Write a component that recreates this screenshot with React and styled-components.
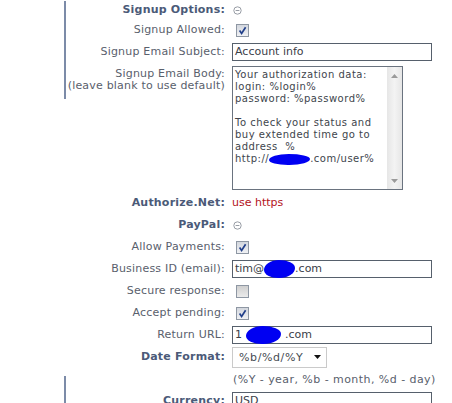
import React from "react";
import styled, { createGlobalStyle } from "styled-components";

const GlobalStyle = createGlobalStyle`
  body {
    margin: 0;
    background: #ffffff;
  }
`;

const Form = styled.div`
  width: 452px;
  padding-top: 1px;
  font-family: "DejaVu Sans", Verdana, sans-serif;
  font-size: 11px;
`;

const Row = styled.div`
  display: grid;
  grid-template-columns: 64px 2px 159px 227px;
  height: ${(p) => p.$h || 22}px;
  align-items: ${(p) => (p.$top ? "start" : "center")};
`;

const Rail = styled.div`
  grid-column: 2;
  align-self: stretch;
  background: ${(p) =>
    p.$from == null
      ? "transparent"
      : `linear-gradient(to bottom, transparent ${p.$from}, #7c8ba8 ${p.$from}, #7c8ba8 ${p.$to}, transparent ${p.$to})`};
`;

const Label = styled.div`
  grid-column: 3;
  text-align: right;
  white-space: nowrap;
  letter-spacing: 0.2px;
  line-height: 12px;
  padding-top: ${(p) => p.$pad || 0}px;
  color: ${(p) => (p.$bold ? "#4b5a78" : "#59606c")};
  font-weight: ${(p) => (p.$bold ? "bold" : "normal")};
`;

const Control = styled.div`
  grid-column: 4;
  display: flex;
  align-items: center;
  padding-left: 7px;
`;

const Toggle = styled.svg`
  margin-left: 1px;
  display: block;
`;

const Box = styled.span`
  display: flex;
  align-items: center;
  justify-content: center;
  width: 13px;
  height: 13px;
  margin-left: 4px;
  box-sizing: border-box;
  border: 1px solid #8e97a3;
  background: ${(p) =>
    p.$on
      ? "linear-gradient(#d3d7de, #f0f1f4)"
      : "linear-gradient(#cfcfcf, #ebebeb)"};
`;

const Field = styled.div`
  display: flex;
  align-items: center;
  width: 200px;
  height: 18px;
  box-sizing: border-box;
  padding: 0 2px;
  border: 1px solid #56606c;
  color: #3b4048;
  line-height: 16px;
  white-space: nowrap;
`;

const Blob = styled.span`
  display: inline-block;
  flex-shrink: 0;
  width: ${(p) => p.$w}px;
  height: ${(p) => p.$h}px;
  margin: 0 ${(p) => p.$mx || 0}px;
  background: #0000f2;
  border-radius: 48% 52% 50% 46% / 55% 45% 55% 45%;
  vertical-align: middle;
`;

const TextArea = styled.div`
  display: grid;
  grid-template-columns: 1fr 15px;
  width: 171px;
  height: 124px;
  box-sizing: border-box;
  margin-top: 3px;
  border: 1px solid #6a737f;
`;

const AreaText = styled.div`
  padding: 2px 2px;
  font-size: 10px;
  line-height: 12px;
  letter-spacing: 0.5px;
  color: #40454c;
  white-space: pre;
`;

const Scroll = styled.div`
  display: flex;
  flex-direction: column;
  justify-content: space-between;
  align-items: center;
  padding: 7px 0 6px;
  background: linear-gradient(to right, #e6e6e6, #f3f3f3 50%, #e6e6e6);
`;

const Red = styled.span`
  color: #b3131c;
  line-height: 12px;
`;

const Hint = styled.span`
  color: #59606c;
  letter-spacing: 0.45px;
  padding-left: 1px;
`;

const Select = styled.div`
  display: flex;
  align-items: center;
  justify-content: space-between;
  width: 95px;
  height: 21px;
  box-sizing: border-box;
  padding: 0 5px 0 6px;
  border: 1px solid #cacaca;
  color: #464b52;
  letter-spacing: 0.6px;
`;

const Minus = () => (
  <Toggle width="9" height="9" viewBox="0 0 9 9">
    <circle cx="4.5" cy="4.5" r="3.7" fill="none" stroke="#8c929b" strokeWidth="0.9" />
    <line x1="2.6" y1="4.5" x2="6.4" y2="4.5" stroke="#8c929b" strokeWidth="0.9" />
  </Toggle>
);

const Check = ({ on }) => (
  <Box $on={on}>
    {on && (
      <svg width="9" height="9" viewBox="0 0 9 9">
        <path d="M1.6 4.6 L3.6 7.4 L7.6 1.2" fill="none" stroke="#213f8a" strokeWidth="1.7" />
      </svg>
    )}
  </Box>
);

const full = { $from: "0px", $to: "100%" };

export default function App() {
  return (
    <>
      <GlobalStyle />
      <Form>
        <Row $h={18}>
          <Rail {...full} />
          <Label $bold>Signup Options:</Label>
          <Control>
            <Minus />
          </Control>
        </Row>
        <Row>
          <Rail {...full} />
          <Label>Signup Allowed:</Label>
          <Control>
            <Check on />
          </Control>
        </Row>
        <Row>
          <Rail {...full} />
          <Label>Signup Email Subject:</Label>
          <Control>
            <Field>Account info</Field>
          </Control>
        </Row>
        <Row $h={129} $top>
          <Rail $from="0px" $to="36px" />
          <Label $pad={5}>
            Signup Email Body:
            <br />
            (leave blank to use default)
          </Label>
          <Control>
            <TextArea>
              <AreaText>
                {"Your authorization data:\nlogin: %login%\npassword: %password%\n\nTo check your status and\nbuy extended time go to\naddress  %\nhttp://"}
                <Blob $w={41} $h={11} />
                {".com/user%"}
              </AreaText>
              <Scroll>
                <svg width="7" height="4" viewBox="0 0 7 4">
                  <path d="M0 4 L3.5 0 L7 4 Z" fill="#9a9a9a" />
                </svg>
                <svg width="7" height="4" viewBox="0 0 7 4">
                  <path d="M0 0 L3.5 4 L7 0 Z" fill="#9a9a9a" />
                </svg>
              </Scroll>
            </TextArea>
          </Control>
        </Row>
        <Row>
          <Rail />
          <Label $bold>Authorize.Net:</Label>
          <Control>
            <Red>use https</Red>
          </Control>
        </Row>
        <Row>
          <Rail />
          <Label $bold>PayPal:</Label>
          <Control>
            <Minus />
          </Control>
        </Row>
        <Row>
          <Rail />
          <Label>Allow Payments:</Label>
          <Control>
            <Check on />
          </Control>
        </Row>
        <Row>
          <Rail />
          <Label>Business ID (email):</Label>
          <Control>
            <Field>
              tim@
              <Blob $w={31} $h={18} />
              .com
            </Field>
          </Control>
        </Row>
        <Row>
          <Rail />
          <Label>Secure response:</Label>
          <Control>
            <Check />
          </Control>
        </Row>
        <Row>
          <Rail />
          <Label>Accept pending:</Label>
          <Control>
            <Check on />
          </Control>
        </Row>
        <Row>
          <Rail />
          <Label>Return URL:</Label>
          <Control>
            <Field>
              1
              <Blob $w={35} $h={18} $mx={4} />
              .com
            </Field>
          </Control>
        </Row>
        <Row>
          <Rail />
          <Label $bold>Date Format:</Label>
          <Control>
            <Select>
              %b/%d/%Y
              <svg width="7" height="4" viewBox="0 0 7 4">
                <path d="M0 0 L7 0 L3.5 4 Z" fill="#111" />
              </svg>
            </Select>
          </Control>
        </Row>
        <Row>
          <Rail $from="8px" $to="100%" />
          <Label />
          <Control>
            <Hint>(%Y - year, %b - month, %d - day)</Hint>
          </Control>
        </Row>
        <Row>
          <Rail {...full} />
          <Label $bold>Currency:</Label>
          <Control>
            <Field>USD</Field>
          </Control>
        </Row>
      </Form>
    </>
  );
}
